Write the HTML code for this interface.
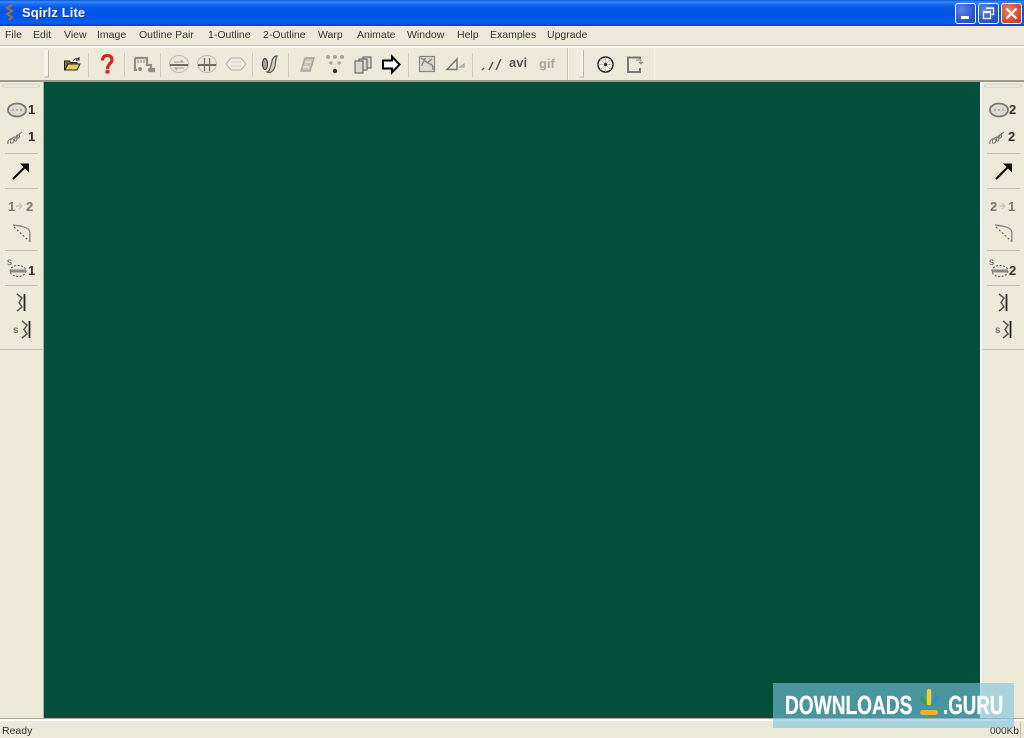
<!DOCTYPE html>
<html><head><meta charset="utf-8"><title>Sqirlz Lite</title>
<style>
html,body{margin:0;padding:0;width:1024px;height:738px;overflow:hidden;background:#ece9d8}
body{position:relative;font-family:"Liberation Sans",sans-serif}
.a{position:absolute}
#title{left:0;top:0;width:1024px;height:26px;background:linear-gradient(to bottom,#0a54d8 0,#3a8cf6 2px,#1a6cf0 4px,#0458e6 8px,#0054e3 14px,#0059ee 20px,#0461f0 23px,#0348c8 25px,#0340b0 26px)}
#ttext{left:22px;top:5px;font:bold 13px/16px "Liberation Sans",sans-serif;color:#fff;text-shadow:1px 1px 0 #0a3aa0;letter-spacing:.1px}
.wb{top:3px;width:19px;height:19px;border:1px solid #fff;border-radius:3px;box-sizing:content-box}
.blue{background:radial-gradient(circle at 30% 30%,#5c86e8,#2a55d0 65%,#2048b8)}
#menu span{position:absolute;top:29px;font:10.5px/13px "Liberation Sans",sans-serif;color:#333;white-space:nowrap}
#canvas{left:44px;top:82px;width:936px;height:636px;background:#02503b}
#wm{left:773px;top:683px;width:241px;height:45px;background:rgba(125,195,225,.6)}
#wmt{left:785px;top:690px;font:bold 26px/30px "Liberation Sans",sans-serif;color:#fff;white-space:nowrap;transform-origin:0 0;transform:scaleX(.735);-webkit-text-stroke:.3px #fff}
#wmt2{left:943px;top:690px;font:bold 26px/30px "Liberation Sans",sans-serif;color:#fff;white-space:nowrap;transform-origin:0 0;transform:scaleX(.72);-webkit-text-stroke:.3px #fff}
#st1{left:2px;top:725px;font:10.5px/13px "Liberation Sans",sans-serif;color:#333}
#st2{left:990px;top:725px;font:10px/13px "Liberation Sans",sans-serif;color:#333}
</style></head><body>
<div class="a" id="title"></div>
<div class="a" id="ttext">Sqirlz Lite</div>
<svg class="a" style="left:4px;top:4px" width="12" height="18" viewBox="0 0 12 18"><path d="M8 1 3 4l5 3-5 3 5 3-3 3" fill="none" stroke="#a06a48" stroke-width="2"/></svg>
<div class="a wb blue" style="left:955px"><div class="a" style="left:5px;top:12px;width:8px;height:3px;background:#fff"></div></div>
<div class="a wb blue" style="left:978px"><svg class="a" style="left:3px;top:3px" width="13" height="13"><path d="M4.500 1.500h7v6h-2M1.500 5.500h7v6h-7z M1 4.500h8M4 1h8" fill="none" stroke="#fff" stroke-width="1.200"/></svg></div>
<div class="a wb" style="left:1001px;background:radial-gradient(circle at 35% 35%,#e8806a,#d0482a 70%,#c03818)"><svg class="a" style="left:3px;top:3px" width="13" height="13"><path d="M1.500 1.500 11.500 11.500M11.500 1.500 1.500 11.500" stroke="#fff" stroke-width="2.200"/></svg></div>

<div id="menu">
<span style="left:5px">File</span><span style="left:33px">Edit</span><span style="left:64px">View</span><span style="left:97px">Image</span><span style="left:139px">Outline Pair</span><span style="left:208px">1-Outline</span><span style="left:263px">2-Outline</span><span style="left:318px">Warp</span><span style="left:357px">Animate</span><span style="left:407px">Window</span><span style="left:457px">Help</span><span style="left:490px">Examples</span><span style="left:547px">Upgrade</span>
</div>
<div class="a" style="left:0;top:45px;width:1024px;height:1px;background:#c4c1b1"></div>
<div class="a" style="left:0;top:46px;width:1024px;height:2px;background:#fff"></div>
<div class="a" style="left:0;top:80px;width:1024px;height:2px;background:#9c9a88"></div>

<!-- toolbar -->
<svg class="a" style="left:0;top:47px" width="1024" height="35" viewBox="0 47 1024 35">
<path d="M567.500 48v32" stroke="#c4c1b1"/><path d="M568.500 48v32" stroke="#f6f4ea"/>
<path d="M577.500 48v32" stroke="#f6f4ea"/>
<path d="M654.500 48v32" stroke="#f6f4ea"/>
<rect x="44" y="50" width="4" height="27" fill="#f6f4ea"/><path d="M48.500 50v27h-4" fill="none" stroke="#b8b5a5"/>
<rect x="580" y="50" width="3" height="27" fill="#f6f4ea"/><path d="M583.500 50v27h-4" fill="none" stroke="#b8b5a5"/>
<g stroke="#cfccbc"><path d="M88.500 53v24M124.500 53v24M160.500 53v24M252.500 53v24M288.500 53v24M408.500 53v24M472.500 53v24"/></g>
<!-- open -->
<path d="M64.500 70v-9h5l1 1.500h6.500V70z" fill="#7a7418" stroke="#222"/><path d="M65 70l3-6h12l-3 6z" fill="#dcd060" stroke="#222"/><path d="M73 61c1-2 4-3 6-2M79 57v3h-3" fill="none" stroke="#222"/>
<!-- help -->
<path d="M102.500 60.500c0-6.500 9.500-6.500 9.500-1 0 4.500-4.500 4-4.500 9.500" fill="none" stroke="#d42424" stroke-width="3.200"/><rect x="105.500" y="70" width="4" height="3.500" fill="#d42424"/>
<!-- save-like -->
<path d="M135 58h12v7h4v4h3v2h-5M135 58v12h2" fill="none" stroke="#8f8d82" stroke-width="2.200"/><circle cx="140" cy="69" r="2" fill="#8f8d82"/><circle cx="150" cy="70" r="2.200" fill="#8f8d82"/><path d="M138 60v3M141 60v3M144 60v3" stroke="#8f8d82"/>
<!-- ovals -->
<ellipse cx="179" cy="64" rx="9.500" ry="8.500" fill="#e8e6da" stroke="#c0bdb0"/><path d="M170 65h18" stroke="#6e6c62" stroke-width="2"/><path d="M174 62h9l-2-2M184 68h-9l2 2" fill="none" stroke="#a09e92"/>
<ellipse cx="207" cy="64" rx="9.500" ry="8.500" fill="#e8e6da" stroke="#c0bdb0"/><path d="M198 65h18" stroke="#6e6c62" stroke-width="2"/><path d="M204.500 58v13M209.500 58v13" stroke="#77756a" stroke-width="1.300"/>
<path d="M226 64l5-6h10l5 6-5 6h-10z" fill="#f0eee4" stroke="#b4b2a6"/><path d="M231 62h10M231 66h10" stroke="#cfcdc2"/>
<!-- morph -->
<ellipse cx="265" cy="64" rx="2.500" ry="5.500" fill="#a8a69a" stroke="#444" stroke-width="1.200"/>
<path d="M277 56c-5 0-5 6-6 9s-1 6-4 7c4 2 7-2 8-6s0-6 2-10z" fill="#d4d2c6" stroke="#555" stroke-width="1.200"/>
<path d="M301 71l4-13h9l-4 13z" fill="#c8c6ba" stroke="#a8a69a" stroke-width="1.500"/><path d="M305 62l6 0M303 67h6" stroke="#eee"/>
<!-- dots -->
<g fill="#a8a69a"><circle cx="328" cy="57" r="2"/><circle cx="335" cy="57" r="2"/><circle cx="342" cy="57" r="2"/><circle cx="331" cy="63" r="1.700"/><circle cx="339" cy="63" r="1.700"/></g><circle cx="335" cy="71" r="2.200" fill="#333"/>
<!-- frames -->
<g fill="#d8d6ca" stroke="#555"><rect x="363" y="57" width="8" height="11"/><rect x="359" y="59" width="8" height="11"/><rect x="355" y="61" width="8" height="12"/></g>
<!-- arrow -->
<path d="M383 60.500h9v-4l7.500 8-7.500 8v-4h-9z" fill="#fff" stroke="#000" stroke-width="2"/>
<!-- warp img -->
<rect x="419.500" y="56.500" width="15" height="15" fill="#dcdacc" stroke="#888" stroke-width="1.200"/><path d="M421 58c4 2 5 5 9 6s3 5 3 6M425 58c0 3-3 5-3 8M428 62l4-3" fill="none" stroke="#888" stroke-width="1.500"/>
<!-- triangle -->
<path d="M447 69.500 457 59v10.500z" fill="none" stroke="#777" stroke-width="1.500"/><path d="M460 67l4-3v3z" fill="none" stroke="#999"/>
<!-- lines -->
<path d="M482 70l2-2M489 70l4-8M496 70l5-11" stroke="#444" stroke-width="1.300"/>
<text x="509" y="67" font-family="Liberation Sans" font-weight="bold" font-size="13" fill="#555">avi</text>
<text x="539" y="68" font-family="Liberation Sans" font-weight="bold" font-size="13" fill="#aaa89c">gif</text>
<!-- wheel -->
<circle cx="605.500" cy="64.500" r="7.500" fill="#f2f0e6" stroke="#222" stroke-width="1.500"/><circle cx="605.500" cy="64.500" r="1.500" fill="#222"/><path d="M605.500 57v15M598 64.500h15M600 59l11 11M611 59l-11 11" stroke="#b0aea2" stroke-width=".7"/><circle cx="605.500" cy="64.500" r="1.500" fill="#222"/>
<!-- export -->
<path d="M640 59v-1.500h-12v14.500h12v-4" fill="none" stroke="#777" stroke-width="2"/><path d="M636 60h5v4M643 62l-2 2-2-2" fill="none" stroke="#888"/>
</svg>

<div class="a" id="canvas"></div>
<div class="a" style="left:43px;top:82px;width:1px;height:637px;background:#aca899"></div>
<div class="a" style="left:980px;top:82px;width:2px;height:637px;background:#fff"></div>
<div class="a" style="left:0;top:718px;width:1024px;height:1px;background:#aca899"></div>
<div class="a" style="left:0;top:719px;width:1024px;height:2px;background:#fff"></div>

<!-- side toolbars -->
<svg class="a" style="left:0;top:82px" width="44" height="275" viewBox="0 82 44 275">
<path d="M3 85h36v2H3z" fill="#fff" stroke="#c4c1b1" stroke-width=".8"/>
<g stroke="#c4c1b1"><path d="M5 153.500h33M5 188.500h33M5 250.500h33M5 285.500h33M0 349.500h44"/></g>
<ellipse cx="17" cy="110" rx="9" ry="6.500" fill="#dddbcf" stroke="#777" stroke-width="1.800"/><path d="M12 110h10" stroke="#777" stroke-dasharray="2 2"/>
<text x="28" y="114" font-family="Liberation Sans" font-weight="bold" font-size="13" fill="#333">1</text>
<path d="M8 144c-1-4 3-6 5-5s0 5-2 4 1-6 4-6 2 5 0 4 2-7 4-6-1 4-2 3 3-5 5-6" fill="none" stroke="#777" stroke-width="1.100"/>
<text x="28" y="141" font-family="Liberation Sans" font-weight="bold" font-size="13" fill="#333">1</text>
<path d="M13 179 26 166" stroke="#111" stroke-width="2.200"/><path d="M20 163.500h9v9z" fill="#111"/>
<text x="8" y="211" font-family="Liberation Sans" font-weight="bold" font-size="13" fill="#777">1</text><path d="M16 206h6M19 203l3 3-3 3" fill="none" stroke="#c4c1b5" stroke-width="1.200"/>
<text x="26" y="211" font-family="Liberation Sans" font-weight="bold" font-size="13" fill="#777">2</text>
<path d="M13 225c8 1 14 2 16 5s0 6 1 12" fill="none" stroke="#888" stroke-width="1.400"/><path d="M14 227l15 14" stroke="#555" stroke-dasharray="2 2"/>
<text x="7" y="265" font-family="Liberation Sans" font-size="10" fill="#555">s</text>
<ellipse cx="18" cy="271" rx="8" ry="5.500" fill="none" stroke="#555" stroke-dasharray="2 1.500"/><path d="M10 271h16" stroke="#888" stroke-width="3"/>
<text x="28" y="275" font-family="Liberation Sans" font-weight="bold" font-size="13" fill="#333">1</text>
<path d="M17 294l5 4-3 4.500 3 4.500-5 4" fill="none" stroke="#555" stroke-width="1.500"/><path d="M24.500 294v17" stroke="#222" stroke-width="1.800"/>
<text x="13" y="333" font-family="Liberation Sans" font-weight="bold" font-size="10" fill="#777">s</text>
<path d="M22 321l5 4-3 4.500 3 4.500-5 4" fill="none" stroke="#555" stroke-width="1.500"/><path d="M29.500 321v17" stroke="#222" stroke-width="1.800"/>
</svg>
<svg class="a" style="left:982px;top:82px" width="42" height="275" viewBox="982 82 42 275">
<path d="M985 85h36v2h-36z" fill="#fff" stroke="#c4c1b1" stroke-width=".8"/>
<g stroke="#c4c1b1"><path d="M987 153.500h33M987 188.500h33M987 250.500h33M987 285.500h33M982 349.500h42"/></g>
<ellipse cx="999" cy="110" rx="9" ry="6.500" fill="#dddbcf" stroke="#777" stroke-width="1.800"/><path d="M994 110h10" stroke="#777" stroke-dasharray="2 2"/>
<text x="1009" y="114" font-family="Liberation Sans" font-weight="bold" font-size="13" fill="#333">2</text>
<path d="M990 144c-1-4 3-6 5-5s0 5-2 4 1-6 4-6 2 5 0 4 2-7 4-6-1 4-2 3 3-5 5-6" fill="none" stroke="#777" stroke-width="1.100"/>
<text x="1008" y="141" font-family="Liberation Sans" font-weight="bold" font-size="13" fill="#333">2</text>
<path d="M996 179 1009 166" stroke="#111" stroke-width="2.200"/><path d="M1003 163.500h9v9z" fill="#111"/>
<text x="990" y="211" font-family="Liberation Sans" font-weight="bold" font-size="13" fill="#777">2</text><path d="M999 206h6M1002 203l3 3-3 3" fill="none" stroke="#c4c1b5" stroke-width="1.200"/>
<text x="1008" y="211" font-family="Liberation Sans" font-weight="bold" font-size="13" fill="#777">1</text>
<path d="M995 225c8 1 14 2 16 5s0 6 1 12" fill="none" stroke="#888" stroke-width="1.400"/><path d="M996 227l15 14" stroke="#555" stroke-dasharray="2 2"/>
<text x="989" y="265" font-family="Liberation Sans" font-size="10" fill="#555">s</text>
<ellipse cx="1000" cy="271" rx="8" ry="5.500" fill="none" stroke="#555" stroke-dasharray="2 1.500"/><path d="M992 271h16" stroke="#888" stroke-width="3"/>
<text x="1009" y="275" font-family="Liberation Sans" font-weight="bold" font-size="13" fill="#333">2</text>
<path d="M999 294l5 4-3 4.500 3 4.500-5 4" fill="none" stroke="#555" stroke-width="1.500"/><path d="M1006.500 294v17" stroke="#222" stroke-width="1.800"/>
<text x="995" y="333" font-family="Liberation Sans" font-weight="bold" font-size="10" fill="#777">s</text>
<path d="M1003 321l5 4-3 4.500 3 4.500-5 4" fill="none" stroke="#555" stroke-width="1.500"/><path d="M1010.500 321v17" stroke="#222" stroke-width="1.800"/>
</svg>

<div class="a" id="st1">Ready</div>
<div class="a" id="st2">000Kb</div>
<div class="a" style="left:1020px;top:722px;width:1px;height:16px;background:#c4c1b1"></div>

<!-- watermark -->
<div class="a" id="wm"></div>
<div class="a" id="wmt">DOWNLOADS</div>
<svg class="a" style="left:917px;top:688px" width="24" height="30" viewBox="0 0 24 30">
<path d="M3.500 9.500 12 17" stroke="#3aa050" stroke-width="4.500" fill="none"/><path d="M20.500 9.500 12 17" stroke="#3090d0" stroke-width="4.500" fill="none"/>
<path d="M12 3v12" stroke="#f0d030" stroke-width="4.500" stroke-linecap="round"/>
<rect x="3" y="22" width="18" height="5" rx="2.500" fill="#f0b020"/>
</svg>
<div class="a" id="wmt2">.GURU</div>
</body></html>
